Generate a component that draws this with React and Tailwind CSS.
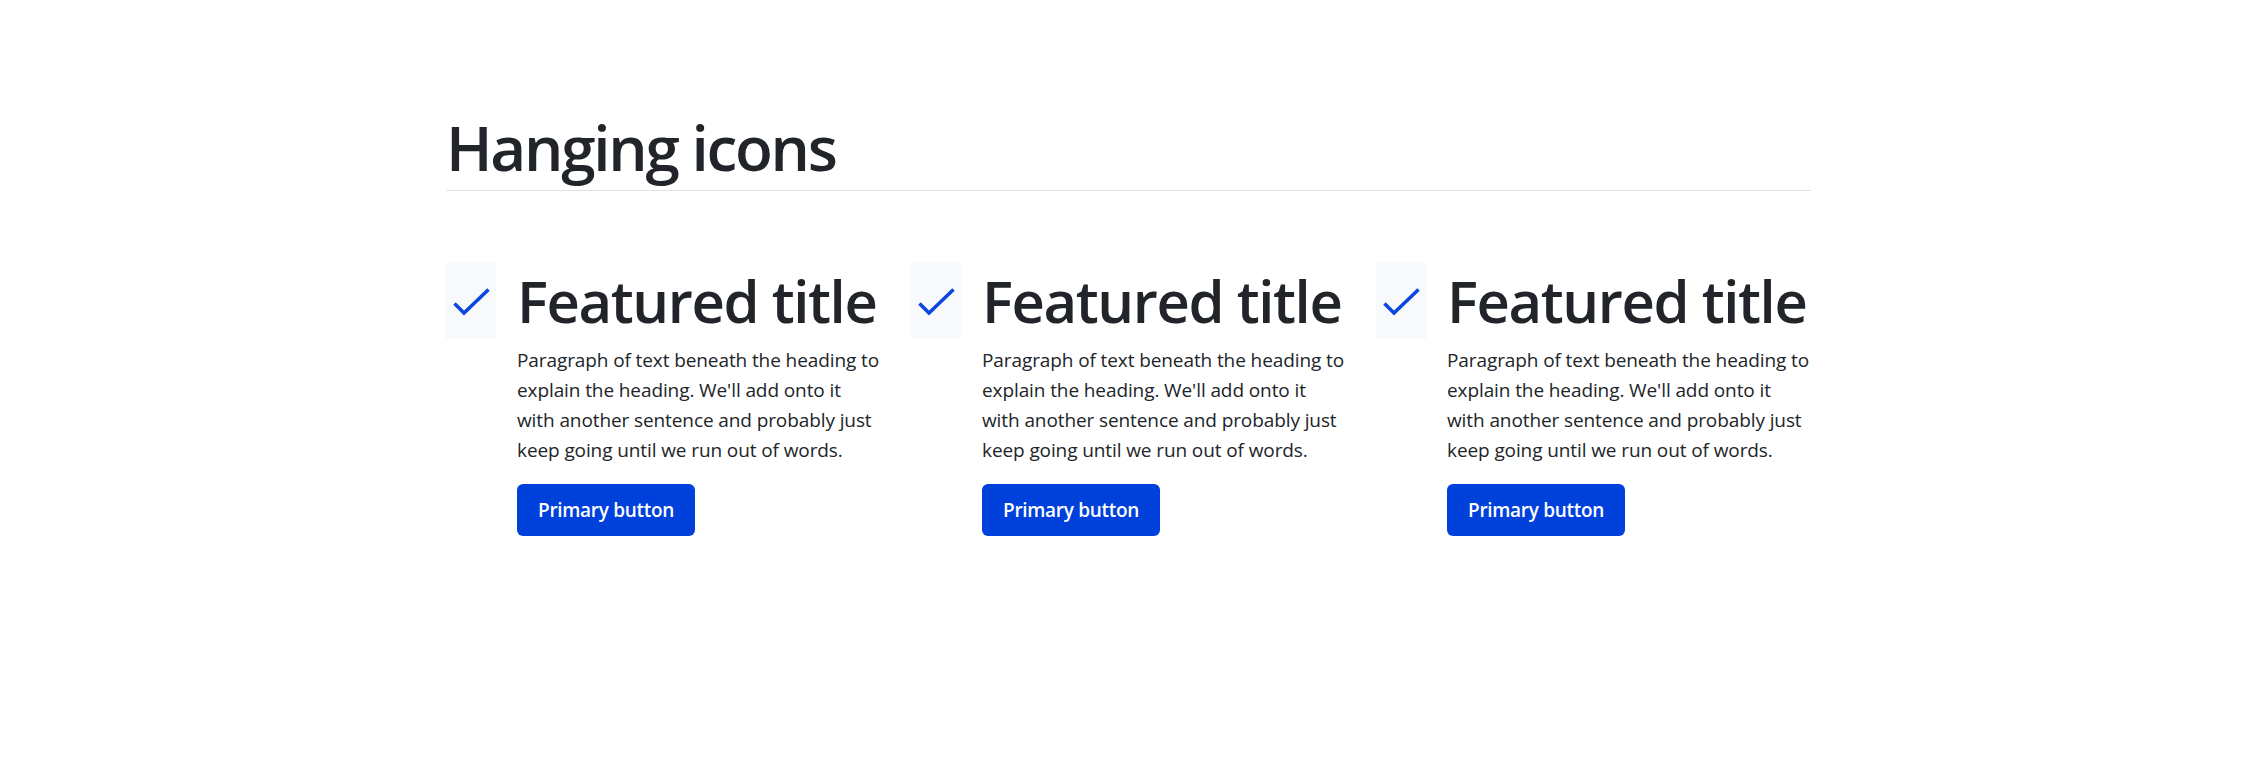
import React from "react";

const Check = () => (
  <svg width="50" height="77" viewBox="0 0 50 77" fill="none">
    <path d="M8.5 41.5 L18 51 L42.5 27.5" stroke="#0b46e0" strokeWidth="3.5" />
  </svg>
);

const Feature = () => (
  <div className="flex items-start">
    <div className="w-[50px] h-[77px] shrink-0 bg-[#f8f9fb] mr-[21px]">
      <Check />
    </div>
    <div className="flex-1">
      <h3 className="text-[58px] leading-[77px] font-semibold text-[#212529] tracking-[-1.4px] whitespace-nowrap mb-[6px]">
        Featured title
      </h3>
      <p className="text-[19px] leading-[30px] text-[#212529] tracking-[-0.1px]">
        Paragraph of text beneath the heading to explain the heading. We'll add onto it with another
        sentence and probably just keep going until we run out of words.
      </p>
      <button className="mt-[19px] h-[52px] px-[21px] rounded-[6px] bg-[#0041dc] text-white text-[19px] font-semibold tracking-[-0.3px]">
        Primary button
      </button>
    </div>
  </div>
);

export default function App() {
  return (
    <div className="min-h-[759px] bg-white font-['Open_Sans',sans-serif]">
      <div className="ml-[446px] w-[1365px] pt-[110px]">
        <h2 className="text-[62px] leading-[1.2] font-semibold text-[#212529] tracking-[-2.25px] pb-[6px] border-b border-[#dee2e6]">
          Hanging icons
        </h2>
        <div className="grid grid-cols-3 gap-x-[30px] pt-[71px]">
          <Feature />
          <Feature />
          <Feature />
        </div>
      </div>
    </div>
  );
}
